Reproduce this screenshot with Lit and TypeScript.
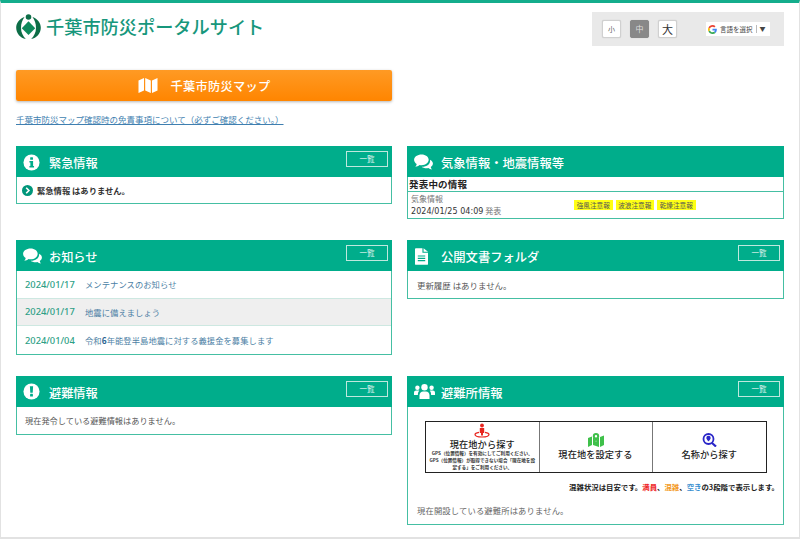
import { LitElement, html, css } from "lit";
import { customElement } from "lit/decorators.js";

const infoIcon = html`<svg class="ico" viewBox="0 0 18 18" width="17" height="17"><circle cx="9" cy="9" r="8.500" fill="#fff"/><rect x="7.600" y="3.400" width="3" height="2.800" rx=".6" fill="#00ad8b"/><path d="M6.800 7.400h3.900v5.400h1v1.600H6.800v-1.600h1v-3.800H6.800z" fill="#00ad8b"/></svg>`;
const alertIcon = html`<svg class="ico" viewBox="0 0 18 18" width="17" height="17"><circle cx="9" cy="9" r="8.500" fill="#fff"/><path d="M7.300 3.500h3.400l-.4 6.800H7.700z" fill="#00ad8b"/><rect x="7.500" y="11.500" width="3" height="2.900" rx=".5" fill="#00ad8b"/></svg>`;
const chatIcon = html`<svg class="ico chat" viewBox="0 0 20 17" width="19" height="16"><path d="M8 .5c4.200 0 7.500 2.500 7.500 5.700S12.200 12 8 12c-.8 0-1.500-.1-2.200-.2C4.500 12.900 3 13.500 1.300 13.600c.8-.8 1.300-1.800 1.500-2.900C1.100 9.600 0 8 0 6.200 0 3 3.600.5 8 .5z" fill="#fff"/><path d="M17 6c1.800 1 3 2.500 3 4.200 0 1.500-.9 2.800-2.300 3.700.1.900.6 1.800 1.300 2.500-1.500-.1-2.800-.6-3.900-1.500-.6.100-1.300.2-2 .2-2 0-3.800-.6-5-1.600 5 .2 9.500-2.700 8.900-7.500z" fill="#fff"/></svg>`;
const docIcon = html`<svg class="ico" viewBox="0 0 14 18" width="13" height="17"><path d="M0 1a1 1 0 0 1 1-1h7v5h6v12a1 1 0 0 1-1 1H1a1 1 0 0 1-1-1z" fill="#fff"/><path d="M9.200 0L14 3.900H9.200z" fill="#fff"/><path d="M3 8.500h8M3 11h8M3 13.500h8" stroke="#00ad8b" stroke-width="1.200"/></svg>`;
const usersIcon = html`<svg class="ico" viewBox="0 0 21 15" width="21" height="15"><g fill="#fff"><circle cx="10.500" cy="3.200" r="3.200"/><path d="M5.500 15v-3.500c0-2.500 1.800-4 3.500-4h3c1.800 0 3.500 1.500 3.500 4V15z"/><circle cx="3.400" cy="3.800" r="2.200"/><path d="M0 11V8.800C0 7.200 1 6.500 2.200 6.500h2c.4 0 .8.100 1.100.3C4.300 7.800 3.800 9.300 3.900 11z"/><circle cx="17.600" cy="3.800" r="2.200"/><path d="M21 11V8.800c0-1.600-1-2.300-2.200-2.300h-2c-.4 0-.8.100-1.100.3 1 1 1.500 2.500 1.400 4.200z"/></g></svg>`;

const panel = (icon: unknown, title: string, more: boolean, body: unknown, cls = "") => html`
  <section class="panel ${cls}">
    <header class="phead">
      <span class="picon">${icon}</span>
      <h2>${title}</h2>
      ${more ? html`<a class="more">一覧</a>` : ""}
    </header>
    <div class="pbody">${body}</div>
  </section>`;

@customElement("app-root")
export class AppRoot extends LitElement {
  static styles = css`
    :host {
      display: block;
      width: 800px;
      height: 539px;
      box-sizing: border-box;
      overflow: hidden;
      background: #fff;
      border-top: 3px solid #14ad8c;
      border-left: 1px solid #e2e2e2;
      border-right: 1px solid #e2e2e2;
      border-bottom: 2px solid #e2e2e2;
      font-family: "Noto Sans CJK JP", "Noto Sans", sans-serif;
      color: #333;
    }
    .top {
      display: flex;
      justify-content: space-between;
      align-items: flex-start;
      padding: 0 15px;
      height: 67px;
    }
    .brand {
      display: flex;
      align-items: center;
      gap: 5px;
      margin-top: 10px;
    }
    .brand h1 {
      margin: 0;
      font-size: 18.200px;
      font-weight: 500;
      line-height: 26px;
      color: #17977c;
    }
    .tools {
      width: 192px;
      height: 34px;
      margin-top: 9px;
      background: #e9e9e9;
      display: flex;
      align-items: center;
      padding-left: 10px;
      box-sizing: border-box;
    }
    .sz {
      width: 19px;
      height: 18px;
      box-sizing: border-box;
      background: #fff;
      border: 1px solid #d0d0d0;
      border-radius: 2px;
      box-shadow: 0 0 1px rgba(0,0,0,.2);
      display: flex;
      align-items: center;
      justify-content: center;
      line-height: 1;
      color: #666;
      margin-right: 9px;
    }
    .sz.s { font-size: 7px; }
    .sz.m { font-size: 8px; background: #888; border-color: #888; color: #ddd; }
    .sz.l { font-size: 11px; color: #333; }
    .gt {
      margin-left: 20px;
      width: 64px;
      height: 14px;
      background: #fff;
      display: flex;
      align-items: center;
      font-size: 6.500px;
      color: #444;
      white-space: nowrap;
      padding-left: 2px;
      box-sizing: border-box;
    }
    .gt svg { margin-right: 3px; flex: none; }
    .gt i { font-style: normal; margin-left: 3px; padding-left: 3px; border-left: 1px solid #bbb; font-size: 6px; line-height: 8px; color: #444; }
    .mapbtn {
      margin-left: 15px;
      width: 376px;
      height: 31px;
      border-radius: 2px;
      background: linear-gradient(#ff9a24, #ff8500);
      box-shadow: 0 1px 3px rgba(0,0,0,.3);
      color: #fff;
      display: flex;
      align-items: center;
      justify-content: center;
      gap: 13px;
      font-size: 12.200px;
      font-weight: 500;
      letter-spacing: .3px;
      box-sizing: border-box;
    }
    .disc {
      display: block;
      margin: 12px 0 0 15px;
      font-size: 8.500px;
      line-height: 13px;
      color: #3f7fb0;
      text-decoration: underline;
    }
    .grid {
      margin: 20px 15px 0;
      display: grid;
      grid-template-columns: 376px 377px;
      column-gap: 15px;
      row-gap: 21px;
      align-items: start;
    }
    .panel {
      border: 1px solid #45bfa3;
      border-top: none;
      box-sizing: border-box;
      background: #fff;
    }
    .phead {
      height: 31px;
      margin: 0 -1px;
      background: #00ad8b;
      color: #fff;
      display: flex;
      align-items: center;
      position: relative;
      padding-left: 7px;
    }
    .picon {
      width: 24px;
      display: flex;
      justify-content: flex-start;
      align-items: center;
      margin-top: 1px;
    }
    .picon .ico { display: block; }
    .phead h2 {
      margin: 3px 0 0 2px;
      font-size: 12.200px;
      font-weight: 500;
      line-height: 18px;
    }
    .wide .picon { width: 25px; }
    .wide h2 { font-size: 12.300px; margin-left: 2px; }
    .doc h2 { margin-left: 2px; }
    .doc .picon { padding-left: 1px; width: 24px; }
    .more {
      position: absolute;
      right: 4px;
      top: 5px;
      width: 42px;
      height: 16px;
      box-sizing: border-box;
      border: 1px solid #bfe8de;
      color: #e5f6f2;
      font-size: 7.500px;
      line-height: 14px;
      text-align: center;
    }
    .pad { padding: 0 9px; font-size: 8.450px; color: #555; }
    .alertmsg { padding-left: 8px; font-size: 8.200px; }
    .emerg {
      height: 26px;
      display: flex;
      align-items: center;
      padding-left: 5px;
      gap: 4px;
      font-size: 8.300px;
      font-weight: 700;
      color: #333;
    }
    .weather-h {
      font-size: 9.500px;
      font-weight: 700;
      line-height: 14px;
      color: #222;
      padding-left: 1px;
      letter-spacing: .2px;
    }
    .weather {
      border-top: 1px solid #45bfa3;
      height: 27px;
      display: flex;
      padding-left: 3px;
      box-sizing: border-box;
    }
    .wleft { width: 163px; font-size: 8px; line-height: 12px; color: #777; padding-top: 1px; white-space: nowrap; }
    .wleft b { font-family: "DejaVu Sans", sans-serif; font-weight: 400; color: #333; font-size: 8px; letter-spacing: .05px; }
    .tags { display: flex; gap: 3px; padding-top: 8px; }
    .tag { background: #ffff14; font-size: 6.600px; line-height: 10px; height: 10px; width: 38.500px; text-align: center; color: #555; white-space: nowrap; }
    .news { display: flex; height: 27.670px; align-items: center; padding-left: 8px; font-size: 8.300px; border-bottom: 1px solid #cde8e1; box-sizing: border-box; }
    .news:last-child { border-bottom: none; }
    .news.alt { background: #efefef; }
    .news .d { width: 60px; color: #2e9f86; font-family: "Noto Sans", sans-serif; font-weight: 500; font-size: 9.300px; }
    .news .t { color: #4d7fa5; letter-spacing: .05px; }
    .news .t b { font-weight: 700; color: #2b6390; }
    .plain { height: 27px; display: flex; align-items: center; }
    .shelter { padding: 14px 0 0; height: 117px; box-sizing: border-box; }
    .cards {
      margin: 0 16px 0 17px;
      height: 52px;
      display: grid;
      grid-template-columns: 113.500px 113px 1fr;
      border: 1px solid #222;
      box-sizing: border-box;
    }
    .card { display: flex; flex-direction: column; align-items: center; text-align: center; border-right: 1px solid #777; color: #222; box-sizing: border-box; min-width: 0; }
    .card:last-child { border-right: none; }
    .card svg { flex: none; display: block; }
    .icon-top { margin-top: 1px; }
    .icon-mid { margin-top: 11px; }
    .card strong { font-size: 9.200px; font-weight: 500; line-height: 12px; letter-spacing: .1px; white-space: nowrap; }
    .mid-label { margin-top: 1px; }
    .card small { display: block; font-size: 4.600px; line-height: 7px; font-weight: 700; color: #333; white-space: nowrap; }
    .note { text-align: right; font-size: 7.400px; font-weight: 700; color: #222; margin: 8px 4px 0 0; line-height: 12px; white-space: nowrap; }
    .note .r { color: #ee1c25; }
    .note .o { color: #f39a1f; }
    .note .b { color: #3a8fd0; }
    .none { font-size: 8.300px; color: #666; padding-left: 9px; margin-top: 11px; line-height: 13px; letter-spacing: .15px; }
  `;

  render() {
    return html`
      <div class="top">
        <div class="brand">
          <svg width="25" height="25" viewBox="0 0 26 26">
            <circle cx="13" cy="3.200" r="2.900" fill="#0d6d47"/>
            <path d="M8.800 3.200C3.600 5.200.2 9.400.2 14.200c0 6 4.400 10.800 10 11.700C7.300 23 5.200 19 5.200 14.500c0-4.400 1.300-8 3.600-11.300z" fill="#0d6d47"/>
            <path d="M17.200 3.200c5.200 2 8.600 6.200 8.600 11 0 6-4.400 10.800-10 11.700 2.900-2.900 5-6.900 5-11.400 0-4.400-1.300-8-3.600-11.300z" fill="#0d6d47"/>
            <path d="M13 7.500l7 7.200-7 7.200-7-7.200z" fill="#0d8a5c"/>
          </svg>
          <h1>千葉市防災ポータルサイト</h1>
        </div>
        <div class="tools">
          <span class="sz s">小</span><span class="sz m">中</span><span class="sz l">大</span>
          <span class="gt">
            <svg width="9" height="9" viewBox="0 0 48 48"><path fill="#EA4335" d="M24 9.500c3.500 0 6.700 1.200 9.200 3.600l6.900-6.900C35.900 2.400 30.500 0 24 0 14.600 0 6.500 5.400 2.600 13.200l8 6.200C12.500 13.600 17.800 9.500 24 9.500z"/><path fill="#4285F4" d="M47 24.500c0-1.600-.1-3.100-.4-4.500H24v9h12.900c-.6 3-2.200 5.500-4.700 7.200l7.700 6c4.500-4.200 7.100-10.300 7.100-17.700z"/><path fill="#FBBC05" d="M10.500 28.600c-.5-1.400-.8-3-.8-4.600s.3-3.200.8-4.600l-8-6.200C.9 16.500 0 20.100 0 24s.9 7.500 2.600 10.800l7.900-6.200z"/><path fill="#34A853" d="M24 48c6.500 0 11.900-2.100 15.900-5.800l-7.700-6c-2.200 1.400-4.900 2.300-8.200 2.300-6.200 0-11.500-4.200-13.400-9.800l-8 6.200C6.500 42.600 14.600 48 24 48z"/></svg>
            言語を選択<i>▼</i>
          </span>
        </div>
      </div>

      <a class="mapbtn">
        <svg width="20" height="15" viewBox="0 0 19 15"><path d="M0 2.500L5.500 0v12.500L0 15zM6.700 0l5.600 2.500V15l-5.600-2.500zM13.500 2.500L19 0v12.500L13.500 15z" fill="#fff"/></svg>
        <span>千葉市防災マップ</span>
      </a>
      <a class="disc">千葉市防災マップ確認時の免責事項について（必ずご確認ください。）</a>

      <div class="grid">
        ${panel(infoIcon, "緊急情報", true, html`
          <div class="emerg">
            <svg width="11" height="11" viewBox="0 0 11 11"><circle cx="5.500" cy="5.500" r="5.500" fill="#00967a"/><path d="M4.200 2.800l2.700 2.700-2.700 2.700" fill="none" stroke="#fff" stroke-width="1.600"/></svg>
            <span>緊急情報 はありません。</span>
          </div>`)}
        ${panel(chatIcon, "気象情報・地震情報等", false, html`
          <div class="weather-h">発表中の情報</div>
          <div class="weather">
            <div class="wleft">気象情報<br><b>2024/01/25 04:09</b> 発表</div>
            <div class="tags"><span class="tag">強風注意報</span><span class="tag">波浪注意報</span><span class="tag">乾燥注意報</span></div>
          </div>`, "wide")}
        ${panel(chatIcon, "お知らせ", true, html`
          <div class="news"><span class="d">2024/01/17</span><span class="t">メンテナンスのお知らせ</span></div>
          <div class="news alt"><span class="d">2024/01/17</span><span class="t">地震に備えましょう</span></div>
          <div class="news"><span class="d">2024/01/04</span><span class="t">令和<b>6</b>年能登半島地震に対する義援金を募集します</span></div>`)}
        ${panel(docIcon, "公開文書フォルダ", true, html`<div class="pad plain">更新履歴 はありません。</div>`, "wide doc")}
        ${panel(alertIcon, "避難情報", true, html`<div class="pad plain alertmsg">現在発令している避難情報はありません。</div>`)}
        ${panel(usersIcon, "避難所情報", true, html`
          <div class="shelter">
            <div class="cards">
              <div class="card">
                <svg class="icon-top" width="16" height="15" viewBox="0 0 16 14"><circle cx="8" cy="2" r="1.900" fill="#e8251f"/><path d="M5.800 4.400h4.400v5.200H9V12H7V9.600H5.800z" fill="#e8251f"/><path d="M5 8.800C2.700 9.200 1 10 1 11c0 1.400 3.100 2.500 7 2.500s7-1.100 7-2.500c0-1-1.700-1.800-4-2.200" fill="none" stroke="#e8251f" stroke-width="1.200"/></svg>
                <strong>現在地から探す</strong>
                <small>GPS（位置情報）を有効にしてご利用ください。<br>GPS（位置情報）が取得できない場合「現在地を設<br>定する」をご利用ください。</small>
              </div>
              <div class="card">
                <svg class="icon-mid" width="16" height="14" viewBox="0 0 16 14"><path d="M0 5l4-1.500V12L0 14zM12 4l4-1.500V12l-4 2zM5 5h1l2 4 2-4h1v9l-6-2z" fill="#3fc04a"/><path d="M8 0a3.200 3.200 0 0 1 3.200 3.200C11.200 5.500 8 8.500 8 8.500S4.800 5.500 4.800 3.200A3.200 3.200 0 0 1 8 0zm0 2a1.200 1.200 0 1 0 0 2.400A1.200 1.200 0 0 0 8 2z" fill="#3fc04a"/></svg>
                <strong class="mid-label">現在地を設定する</strong>
              </div>
              <div class="card">
                <svg class="icon-mid" width="15" height="14" viewBox="0 0 15 14"><circle cx="6.500" cy="6" r="5" fill="none" stroke="#2a26c8" stroke-width="1.800"/><path d="M10 10l4 3.500" stroke="#2a26c8" stroke-width="2.200"/><path d="M6.500 2.800a2.200 2.200 0 0 1 2.200 2.200c0 1.400-2.200 3.400-2.200 3.400S4.300 6.400 4.300 5a2.200 2.200 0 0 1 2.200-2.200z" fill="#2a26c8"/></svg>
                <strong class="mid-label">名称から探す</strong>
              </div>
            </div>
            <div class="note">混雑状況は目安です。<span class="r">満員</span>、<span class="o">混雑</span>、<span class="b">空き</span>の3段階で表示します。</div>
            <div class="none">現在開設している避難所はありません。</div>
          </div>`, "wide")}
      </div>
    `;
  }
}
